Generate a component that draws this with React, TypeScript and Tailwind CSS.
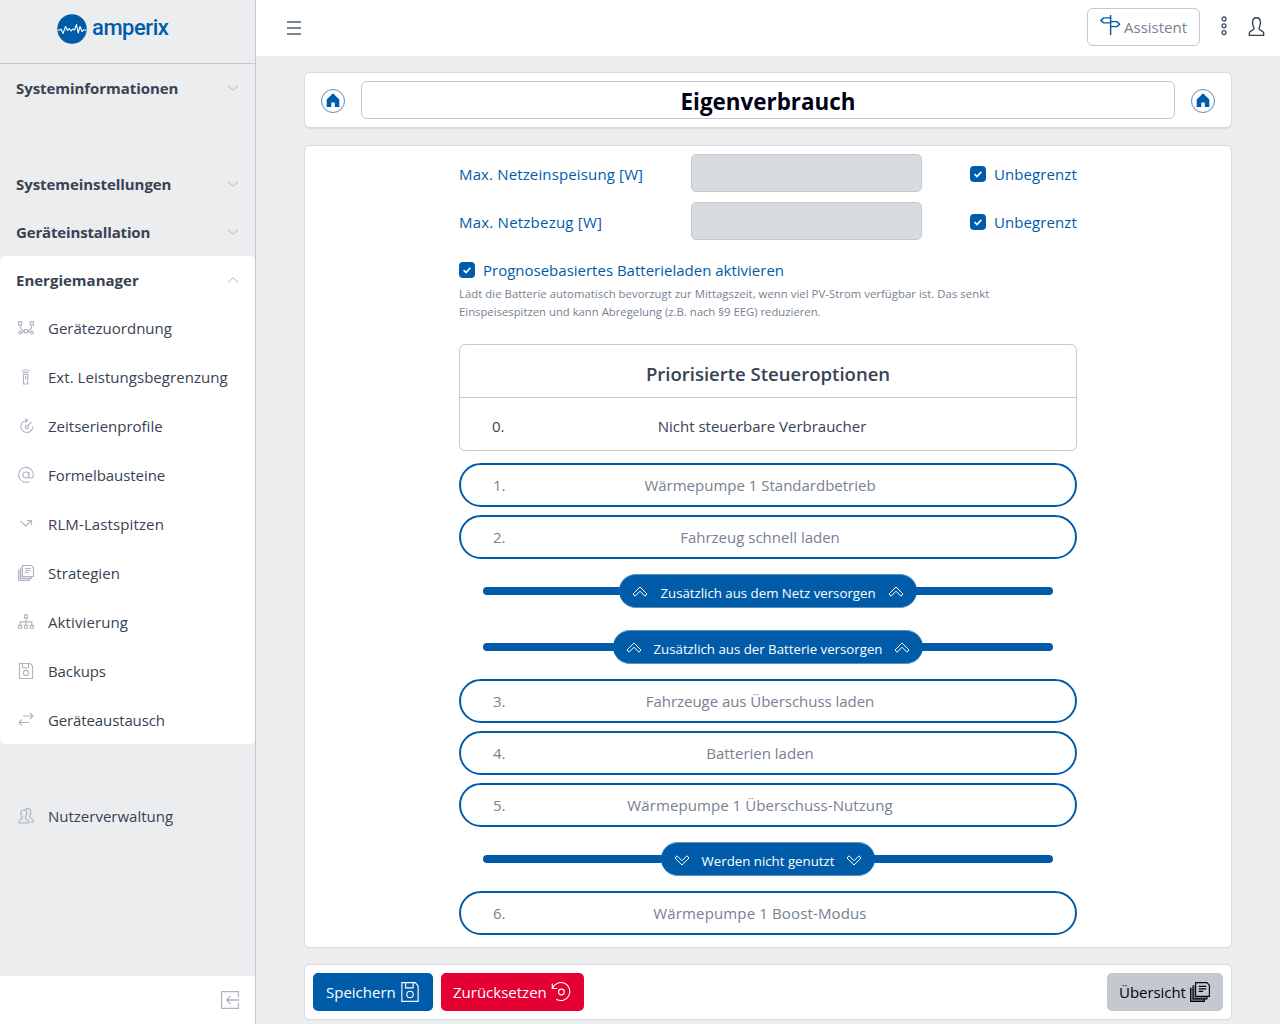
import type { ReactNode } from 'react';
import clsx from 'clsx';

const navItems = [
  { label: 'Gerätezuordnung', icon: 'devices' },
  { label: 'Ext. Leistungsbegrenzung', icon: 'remote', tracking: 'tracking-[0.04px]' },
  { label: 'Zeitserienprofile', icon: 'gauge' },
  { label: 'Formelbausteine', icon: 'at', tracking: 'tracking-[-0.06px]' },
  { label: 'RLM-Lastspitzen', icon: 'peak', tracking: 'tracking-[0.12px]' },
  { label: 'Strategien', icon: 'library', tracking: 'tracking-[0.06px]' },
  { label: 'Aktivierung', icon: 'sitemap', tracking: 'tracking-[0.1px]' },
  { label: 'Backups', icon: 'save', tracking: 'tracking-[-0.1px]' },
  { label: 'Geräteaustausch', icon: 'swap', tracking: 'tracking-[-0.12px]' },
];

const icons: Record<string, ReactNode> = {
  devices: (
    <path d="M.5 1.8h3.200v3.200H.5zM12.300 1.800h3.200v3.200h-3.200zM6.400 9.500h3.200v3.200H6.400zM2.200 5c0 3 1.500 5.500 4.300 6M13.800 5c0 3-1.500 5.500-4.300 6M3.500 12.500l3-1M12.500 12.500l-3-1M.7 12.500a1.400 1.400 0 1 0 2.800 0 1.400 1.400 0 1 0-2.800 0M12.500 12.500a1.400 1.400 0 1 0 2.800 0 1.400 1.400 0 1 0-2.800 0" />
  ),
  remote: <path d="M5.500 5.500h4.200v9.500H5.500zM7.600 7v3.500M3.500 2.200c2-2 6.200-2 8.200 0M5 4c1.300-1.200 3.900-1.200 5.200 0" />,
  gauge: (
    <path d="M9 2.500a6 6 0 1 0 5.900 6M7.500.3l2.200 2.200-2.200 2.200M13.500 4 9.500 7.800M10.500 9a1.700 1.700 0 1 1-1.700-1.700A1.700 1.700 0 0 1 10.500 9" />
  ),
  at: (
    <path d="M11 5v4.300c0 1.200.6 1.900 1.700 1.900 1.500 0 2.700-1.200 2.700-3.400a7.400 7.400 0 1 0-4 6.600M11 8a3 3 0 1 1-6 0 3 3 0 0 1 6 0" />
  ),
  peak: <path d="m2.500 4.800 5.300 5.400 5.200-5.700M8.800 4.500h4.700V9" />,
  library: (
    <>
      <path d="M4.500.5h9l2 2v9h-11zM2.500 2.500v11h11v-2M.5 4.500v11h11v-2M7 3.500h6M7 5.500h6M7 7.500h3.500" />
      <path d="M2.500 2.500h2v9h9v2h-11zM.5 4.500h2v9h9v2H.5z" fill="currentColor" fillOpacity=".35" stroke="none" />
    </>
  ),
  sitemap: (
    <path d="M6.500.8h3v3h-3zM8 3.800v7.500M2.200 11V7.800h11.600V11M.7 11.300h3v2.900h-3zM6.500 11.300h3v2.900h-3zM12.300 11.300h3v2.900h-3z" />
  ),
  save: (
    <path d="M1.500.5h10.700l2.300 2.600v12.400h-13zM4.500.8v3.900h6V.8M10.600 10a2.600 2.600 0 1 1-5.200 0 2.600 2.600 0 0 1 5.200 0" />
  ),
  swap: <path d="M5 4h10M12 1l3 3-3 3M11 10.500H1.200M4 7.500l-3 3 3 3" />,
  users: (
    <path d="M1 15v-1.500c0-1.500 3.200-2 3.200-3.600 0-1-1.400-2-1.400-4.400C2.800 3.500 4 2 5.800 2s3 1.500 3 3.500c0 2.400-1.400 3.400-1.400 4.400 0 1.600 3.200 2.100 3.200 3.600V15zM7 2c.5-.9 1.500-1.400 2.700-1.400 2 0 3.200 1.500 3.200 3.700 0 2.400-1.300 3.200-1.300 4.200 0 1.500 3.600 2.300 3.600 4V14h-3" />
  ),
  restore: (
    <path d="M1 1.200v4h4M1.200 5A7.200 7.200 0 1 1 4.200 13.800M10.600 8a2.300 2.300 0 1 1-4.600 0 2.300 2.300 0 0 1 4.600 0" />
  ),
  signpost: (
    <path d="M8.500 0v16M8.500 2.300H2.800L.7 4.300l2.100 2h5.700zM8.500 5.300h5.200l2 2-2 2H8.500z" />
  ),
  user: (
    <path d="M2 15.500v-2.200c0-1.300 3.900-2 3.900-3.700C5.900 8.500 4.700 7.700 4.700 4.600 4.700 2.200 6 .6 8 .6s3.300 1.600 3.300 4c0 3.100-1.200 3.900-1.200 5 0 1.700 3.900 2.400 3.900 3.700v2.200z" />
  ),
  leave: <path d="M15.500 5.500v-5H.5v15h15v-5M16 8H5M8.500 4.500 5 8l3.500 3.500" />,
};

function Icon({ name, className, width = 1.15 }: { name: string; className?: string; width?: number }) {
  return (
    <svg viewBox="0 0 16 16" className={clsx('shrink-0 overflow-visible', className)} fill="none" stroke="currentColor" strokeWidth={width}>
      {icons[name]}
    </svg>
  );
}

function Chevron({ up }: { up?: boolean }) {
  return (
    <svg viewBox="0 0 12 6" className={clsx('h-1.5 w-3 text-[#afb5c0]', up && 'rotate-180')} fill="none" stroke="currentColor">
      <path d="M1 .5l5 4.800 5-4.800" />
    </svg>
  );
}

function NavGroup({ label, open, tracking }: { label: string; open?: boolean; tracking?: string }) {
  return (
    <div className="flex h-12 items-center justify-between px-4">
      <span className={clsx('font-bold', tracking)}>{label}</span>
      <Chevron up={open} />
    </div>
  );
}

function NavItem({ label, icon, tracking }: { label: string; icon: string; tracking?: string }) {
  return (
    <div className="flex h-12 items-center pl-[18px]">
      <Icon name={icon} className="size-4 text-[#afb5c0]" />
      <span className={clsx('ml-3.5', tracking)}>{label}</span>
    </div>
  );
}

function Checkbox() {
  return (
    <span className="flex size-4 shrink-0 items-center justify-center rounded-[4px] bg-[#005ca9]">
      <svg viewBox="0 0 8 8" className="size-2" fill="none" stroke="white" strokeWidth="1.6">
        <path d="M.6 4.200 3 6.500 7.400 1.700" />
      </svg>
    </span>
  );
}

function HomeButton() {
  return (
    <svg viewBox="0 0 24 24" className="mt-0.5 size-6 shrink-0">
      <circle cx="12" cy="12" r="11.500" fill="none" stroke="#4f8dc3" />
      <path d="M12 4.300 18.300 10.500V18h-4.500v-4.600h-3.500V18H5.700v-7.500z" fill="#005ca9" />
    </svg>
  );
}

function LimitRow({ label, tracking }: { label: string; tracking: string }) {
  return (
    <div className="flex h-[38px] items-center">
      <span className={clsx('w-[232px] pt-[3px]', tracking)}>{label}</span>
      <div className="h-full w-[231px] rounded-[5px] border border-[#c4c9d0] bg-[#d8dbe0]" />
      <div className="ml-12 flex items-center gap-2 pt-[2px]">
        <Checkbox />
        <span className="tracking-[0.08px]">Unbegrenzt</span>
      </div>
    </div>
  );
}

function Option({ no, label, tracking }: { no: number; label: string; tracking?: string }) {
  return (
    <div className="flex h-11 items-center rounded-full border-2 border-[#005ca9] pr-24 pl-8 text-[#768192]">
      <span className="w-12">{no}.</span>
      <span className={clsx('flex-1 text-center', tracking)}>{label}</span>
    </div>
  );
}

function DoubleChevron({ down }: { down?: boolean }) {
  return (
    <svg viewBox="0 0 16 12" className={clsx('mt-0.5 h-3 w-4', down && 'rotate-180')} fill="none" stroke="currentColor">
      <path d="M8 1 1 8l2 2.200L8 5.200l5 5L15 8z" />
    </svg>
  );
}

function Separator({ label, down }: { label: string; down?: boolean }) {
  return (
    <div className="mx-6 flex h-12 items-center">
      <div className="-mr-2 h-2 flex-1 rounded-l-full bg-[#005ca9]" />
      <div className="flex h-[34px] items-center gap-3 rounded-full border-y border-[#5b95c6] bg-[#005ca9] px-[13px] text-[13.250px] text-white">
        <DoubleChevron down={down} />
        <span className="pt-[5px]">{label}</span>
        <DoubleChevron down={down} />
      </div>
      <div className="-ml-2 h-2 flex-1 rounded-r-full bg-[#005ca9]" />
    </div>
  );
}

export default function App() {
  return (
    <div className="flex h-[1024px] w-[1280px] overflow-hidden bg-[#ebedef] font-['Open_Sans','Noto_Sans',sans-serif] text-[15px] text-[#374253]">
      <aside className="flex w-64 flex-col border-r border-[#c4c9d0]">
        <div className="flex h-16 items-start border-b border-[#c4c9d0] pt-3.5 pl-[57px]">
          <svg viewBox="0 0 30 30" className="size-[30px]">
            <circle cx="15" cy="15" r="14.700" fill="#005ca9" />
            <path
              d="M1 16.500 4 15.300 6 19.500 8.500 12.500 10.500 16.500 12 14.500 14 17 15.500 15 17.500 16 19.500 10.500 21.200 19 23 12.500 25 17.500 26.800 15.800 29 16.300"
              fill="none"
              stroke="white"
              strokeWidth="1.1"
              strokeLinejoin="round"
            />
          </svg>
          <span className="ml-[5px] font-[Roboto] text-[22px] leading-[28px] font-medium tracking-[-0.45px] text-[#005ca9]">
            amperix
          </span>
        </div>
        <NavGroup label="Systeminformationen" tracking="tracking-[-0.06px]" />
        <div className="h-12" />
        <NavGroup label="Systemeinstellungen" tracking="tracking-[-0.06px]" />
        <NavGroup label="Geräteinstallation" tracking="tracking-[-0.15px]" />
        <div className="rounded-md bg-white">
          <NavGroup label="Energiemanager" open />
          <div className="flex flex-col gap-px">
            {navItems.map((item) => (
              <NavItem key={item.label} {...item} />
            ))}
          </div>
        </div>
        <div className="mt-12">
          <NavItem label="Nutzerverwaltung" icon="users" />
        </div>
        <div className="mt-auto flex h-12 items-center justify-end bg-white pr-4">
          <Icon name="leave" className="size-[18px] text-[#afb5c0]" />
        </div>
      </aside>

      <div className="flex flex-1 flex-col">
        <header className="flex h-14 items-center bg-white pr-3.5 pl-[31px]">
          <svg viewBox="0 0 14 14" className="size-3.5" stroke="#4f5d73">
            <path d="M0 1h14M0 7h14M0 13h14" strokeWidth="1.3" />
          </svg>
          <div className="mb-0.5 ml-auto flex h-[38px] w-[113px] items-center rounded-md border border-[#c4c9d0] pl-3 text-[#768192]">
            <Icon name="signpost" className="mb-1 size-5 text-[#005ca9]" />
            <span className="ml-1">Assistent</span>
          </div>
          <svg viewBox="0 0 6 20" className="mb-1 ml-[21px] h-5 w-1.5" fill="none" stroke="#3c4b64" strokeWidth="1.300">
            <circle cx="3" cy="3" r="2" />
            <circle cx="3" cy="9.800" r="2" />
            <circle cx="3" cy="16.600" r="2" />
          </svg>
          <Icon name="user" className="mb-1 ml-5 size-[19px]" />
        </header>

        <main className="flex flex-col gap-4 px-12 pt-4">
          <section className="flex h-[57px] items-center gap-4 rounded-md border border-b-2 border-[#d8dbe0] bg-white px-4">
            <HomeButton />
            <h1 className="flex h-[38px] flex-1 items-center justify-center rounded-md border border-[#c4c9d0] pt-1 text-[22.400px] font-bold text-[#000015]">
              Eigenverbrauch
            </h1>
            <HomeButton />
          </section>

          <section className="h-[803px] rounded-md border border-[#d8dbe0] bg-white px-[154px] pt-2">
            <div className="flex flex-col gap-2.5 text-[#005ca9]">
              <LimitRow label="Max. Netzeinspeisung [W]" tracking="tracking-[0.14px]" />
              <LimitRow label="Max. Netzbezug [W]" tracking="tracking-[0.22px]" />
            </div>
            <div className="mt-[18px] flex h-6 items-center gap-2 text-[#005ca9]">
              <Checkbox />
              <span>Prognosebasiertes Batterieladen aktivieren</span>
            </div>
            <p className="mt-[3px] text-[11.300px] leading-[18px] text-[#768192]">
              <span className="tracking-[0.05px]">
                Lädt die Batterie automatisch bevorzugt zur Mittagszeit, wenn viel PV-Strom verfügbar ist. Das senkt
              </span>
              <br />
              Einspeisespitzen und kann Abregelung (z.B. nach §9 EEG) reduzieren.
            </p>

            <div className="mt-[23px] h-[107px] rounded-md border border-[#c4c9d0]">
              <h2 className="flex h-[53px] items-center justify-center border-b border-[#c4c9d0] pt-[6px] text-[18.550px] font-semibold">
                Priorisierte Steueroptionen
              </h2>
              <div className="flex h-[52px] items-center pt-1 pr-[92px] pl-8">
                <span className="w-12">0.</span>
                <span className="flex-1 text-center">Nicht steuerbare Verbraucher</span>
              </div>
            </div>

            <div className="mt-3 flex flex-col gap-2">
              <Option no={1} label="Wärmepumpe 1 Standardbetrieb" />
              <Option no={2} label="Fahrzeug schnell laden" />
              <Separator label="Zusätzlich aus dem Netz versorgen" />
              <Separator label="Zusätzlich aus der Batterie versorgen" />
              <Option no={3} label="Fahrzeuge aus Überschuss laden" tracking="tracking-[-0.04px]" />
              <Option no={4} label="Batterien laden" />
              <Option no={5} label="Wärmepumpe 1 Überschuss-Nutzung" tracking="tracking-[0.08px]" />
              <Separator label="Werden nicht genutzt" down />
              <Option no={6} label="Wärmepumpe 1 Boost-Modus" tracking="tracking-[0.14px]" />
            </div>
          </section>

          <section className="flex h-14 items-center gap-2 rounded-md border border-[#d8dbe0] bg-white px-2">
            <button className="flex h-[38px] w-[120px] items-center gap-1 rounded-[5px] bg-[#005ca9] pl-[13px] text-white">
              Speichern
              <Icon name="save" className="size-5" width={0.9} />
            </button>
            <button className="flex h-[38px] w-[143px] items-center gap-1 rounded-[5px] bg-[#e50034] pl-3 text-white">
              Zurücksetzen
              <Icon name="restore" className="size-5" width={0.9} />
            </button>
            <button className="ml-auto flex h-[38px] w-[116px] items-center gap-1 rounded-[5px] bg-[#c4c9d0] pl-3 text-[#000015]">
              <span className="tracking-[-0.05px]">Übersicht</span>
              <Icon name="library" className="size-5" width={0.9} />
            </button>
          </section>
        </main>
      </div>
    </div>
  );
}
